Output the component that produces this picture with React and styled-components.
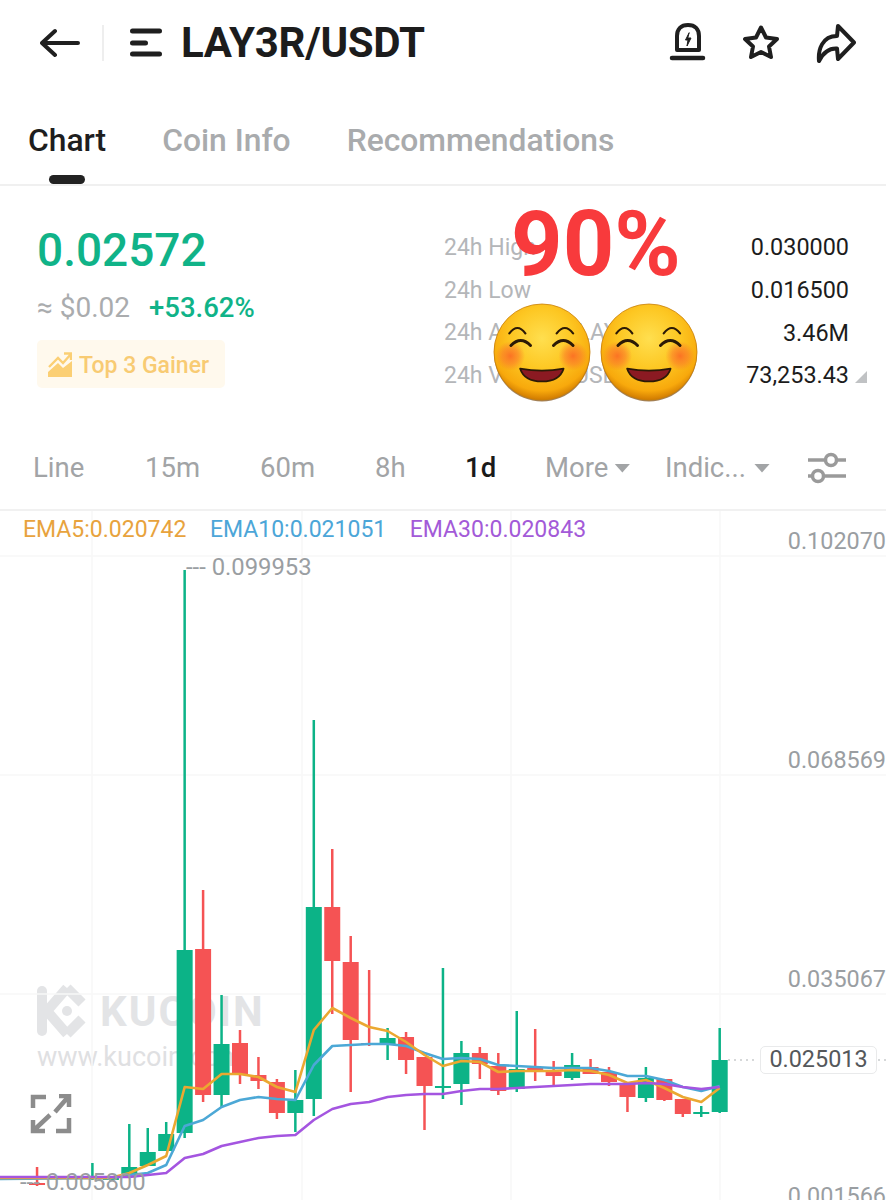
import React from "react";
import styled, { createGlobalStyle } from "styled-components";

const Global = createGlobalStyle`
  html, body { margin: 0; padding: 0; background: #fff; }
  body { font-family: Roboto, "Liberation Sans", sans-serif; }
  * { box-sizing: border-box; }
`;

const Page = styled.div`
  width: 886px;
  height: 1200px;
  overflow: hidden;
  background: #fff;
`;

const Header = styled.header`
  display: flex;
  align-items: center;
  height: 86px;
  padding: 0 30px 0 40px;
`;
const HeaderIcon = styled.svg`
  display: block;
  flex: none;
  fill: none;
  stroke: #1f1f1f;
  stroke-width: ${(p) => p.$stroke || 4};
  stroke-linecap: round;
  stroke-linejoin: round;
`;
const Divider = styled.div`
  width: 2px;
  height: 36px;
  margin: 0 26px 0 22px;
  background: #eeeeee;
`;
const Title = styled.h1`
  margin: 0 0 0 15px;
  font-size: 42px;
  line-height: 48px;
  font-weight: 700;
  letter-spacing: -0.3px;
  color: #1c1c1c;
`;
const HeaderActions = styled.div`
  display: flex;
  align-items: center;
  gap: 35px;
  margin-left: auto;
`;

const Tabs = styled.nav`
  display: flex;
  gap: 56px;
  height: 100px;
  padding: 32px 0 0 28px;
  border-bottom: 2px solid #f0f0f0;
`;
const Tab = styled.div`
  position: relative;
  height: 66px;
  font-size: 31.8px;
  line-height: 44px;
  font-weight: 500;
  color: ${(p) => (p.$active ? "#1e1e1e" : "#a9abad")};
  &::after {
    content: "";
    display: ${(p) => (p.$active ? "block" : "none")};
    position: absolute;
    left: 21px;
    bottom: 0;
    width: 36px;
    height: 9px;
    border-radius: 5px;
    background: #222;
  }
`;

const Summary = styled.section`
  position: relative;
  display: flex;
  justify-content: space-between;
  height: 254px;
  padding: 36px 37px 0 37px;
`;
const PriceColumn = styled.div`
  display: flex;
  flex-direction: column;
  align-items: flex-start;
`;
const Price = styled.div`
  font-size: 46px;
  line-height: 56px;
  font-weight: 500;
  color: #10b388;
`;
const SubRow = styled.div`
  display: flex;
  gap: 19px;
  margin-top: 8px;
  line-height: 44px;
`;
const Fiat = styled.span`
  font-size: 28px;
  color: #aaacae;
`;
const Change = styled.span`
  font-size: 27.5px;
  font-weight: 500;
  color: #10b388;
`;
const GainerTag = styled.div`
  display: flex;
  align-items: center;
  gap: 7px;
  height: 48px;
  margin-top: 10px;
  padding: 2px 16px 0 11px;
  border-radius: 5px;
  background: #fff9ed;
  font-size: 23px;
  font-weight: 500;
  color: #f8cb73;
`;
const Stats = styled.div`
  display: grid;
  grid-template-columns: 1fr auto;
  width: 405px;
  padding-top: 4px;
  grid-auto-rows: 42.7px;
  align-items: center;
  align-self: flex-start;
`;
const StatLabel = styled.div`
  font-size: 23px;
  color: #b4b6b9;
  white-space: nowrap;
`;
const StatValue = styled.div`
  position: relative;
  font-size: 23.4px;
  text-align: right;
  color: #1c1c1c;
  &::after {
    content: "";
    display: ${(p) => (p.$caret ? "block" : "none")};
    position: absolute;
    left: 100%;
    bottom: 6px;
    margin-left: 6px;
    border-style: solid;
    border-width: 0 0 12px 12px;
    border-color: transparent transparent #c0c2c4 transparent;
  }
`;
const BigPercent = styled.div`
  position: absolute;
  left: 511px;
  top: 7px;
  font-size: 90px;
  line-height: 104px;
  font-weight: 700;
  color: #f83a3c;
`;
const EmojiRow = styled.div`
  position: absolute;
  left: 493px;
  top: 117px;
  display: flex;
  gap: 9px;
`;

const Intervals = styled.div`
  display: grid;
  grid-template-columns: 112px 115px 115px 90px 80px 120px 142px auto;
  align-items: center;
  height: 71px;
  padding: 8px 0 23px 33px;
  border-bottom: 2px solid #f1f1f1;
`;
const Interval = styled.div`
  display: flex;
  align-items: center;
  font-size: 27.5px;
  line-height: 40px;
  font-weight: ${(p) => (p.$active ? 500 : 400)};
  color: ${(p) => (p.$active ? "#1a1a1a" : "#a2a4a6")};
`;
const DownCaret = styled.span`
  margin-left: ${(p) => p.$gap}px;
  width: 16px;
  height: 9px;
  background: #a2a4a6;
  clip-path: polygon(0 0, 100% 0, 50% 100%);
`;

const Chart = styled.section`
  position: relative;
  height: 689px;
`;
const ChartSvg = styled.svg`
  position: relative;
  z-index: 1;
  display: block;
`;
const Legend = styled.div`
  position: absolute;
  z-index: 2;
  left: 23px;
  top: 3px;
  display: flex;
  gap: 23.5px;
  font-size: 23px;
  line-height: 32px;
`;
const LegendItem = styled.span`
  color: ${(p) => p.$color};
`;
const AxisLabel = styled.div`
  position: absolute;
  z-index: 2;
  right: 0;
  top: ${(p) => p.$top}px;
  font-size: 23.4px;
  line-height: 30px;
  color: #9a9ea2;
`;
const ExtremeLabel = styled.div`
  position: absolute;
  z-index: 2;
  left: ${(p) => p.$left}px;
  top: ${(p) => p.$top}px;
  font-size: 23.8px;
  line-height: 30px;
  white-space: nowrap;
  color: #9a9ea2;
`;
const PriceTag = styled.div`
  position: absolute;
  z-index: 2;
  left: 760px;
  top: 535px;
  width: 117px;
  height: 28px;
  border: 1.5px solid #e9eaeb;
  border-radius: 5px;
  background: #fff;
  font-size: 23.4px;
  line-height: 25px;
  text-align: center;
  color: #55585b;
`;
const WatermarkLogo = styled.svg`
  position: absolute;
  left: 34px;
  top: 472px;
  fill: none;
  stroke: #e3e4e6;
  stroke-width: 10;
`;
const WatermarkName = styled.div`
  position: absolute;
  left: 100px;
  top: 477px;
  font-size: 42px;
  line-height: 48px;
  font-weight: 700;
  letter-spacing: 2px;
  color: #e3e4e6;
`;
const WatermarkUrl = styled.div`
  position: absolute;
  left: 37px;
  top: 530px;
  font-size: 27px;
  line-height: 32px;
  color: #dfe0e2;
`;
const FullscreenIcon = styled.svg`
  position: absolute;
  z-index: 2;
  left: 30px;
  top: 583px;
  fill: none;
  stroke: #8c8c8c;
  stroke-width: 4.5;
`;

const GREEN = "#0cb387";
const RED = "#f55354";
// [index, colour, wick top, body top, body bottom, wick bottom]
const candles = [
  [-5, "r", 1167, 1183, 1185, 1186],
  [-2, "g", 1163, 1176, 1179, 1180],
  [-1, "g", 1176, 1177, 1180, 1181],
  [0, "g", 1124, 1167, 1175, 1176],
  [1, "g", 1128, 1152, 1166, 1166],
  [2, "g", 1122, 1134, 1151, 1151],
  [3, "g", 570, 950, 1133, 1138],
  [4, "r", 890, 949, 1095, 1102],
  [5, "g", 995, 1044, 1095, 1107],
  [6, "r", 1030, 1043, 1074, 1084],
  [7, "r", 1057, 1075, 1081, 1089],
  [8, "r", 1079, 1082, 1113, 1119],
  [9, "g", 1070, 1100, 1113, 1132],
  [10, "g", 720, 907, 1099, 1116],
  [11, "r", 849, 907, 961, 1014],
  [12, "r", 936, 962, 1040, 1092],
  [13, "r", 970, 1043, 1045, 1046],
  [14, "g", 1028, 1038, 1044, 1060],
  [15, "r", 1032, 1037, 1060, 1074],
  [16, "r", 1057, 1057, 1086, 1130],
  [17, "g", 968, 1086, 1088, 1099],
  [18, "g", 1041, 1053, 1084, 1105],
  [19, "r", 1047, 1053, 1064, 1079],
  [20, "r", 1053, 1066, 1091, 1095],
  [21, "g", 1011, 1069, 1089, 1092],
  [22, "r", 1029, 1068, 1071, 1081],
  [23, "r", 1061, 1072, 1076, 1085],
  [24, "g", 1053, 1065, 1078, 1080],
  [25, "r", 1059, 1067, 1074, 1074],
  [26, "r", 1067, 1072, 1082, 1086],
  [27, "r", 1083, 1083, 1097, 1112],
  [28, "g", 1067, 1078, 1098, 1102],
  [29, "r", 1079, 1079, 1100, 1101],
  [30, "r", 1099, 1099, 1114, 1117],
  [31, "g", 1106, 1112, 1114, 1117],
  [32, "g", 1028, 1060, 1112, 1113],
];
const cx = (i) => 129.3 + 18.45 * i;

const ema5 = [1173,1165,1156,1087,1089,1074,1074,1077,1087,1092,1030,1008,1018,1027,1031,1042,1055,1066,1061,1062,1072,1071,1071,1071,1070,1071,1075,1083,1080,1088,1097,1102,1088];
const ema10 = [1175,1173,1165,1126,1120,1107,1100,1097,1099,1100,1065,1046,1045,1044,1044,1046,1053,1059,1058,1059,1065,1066,1067,1068,1068,1068,1071,1076,1076,1080,1087,1091,1086];
const ema30 = [1177,1175,1173,1158,1154,1146,1142,1138,1136,1135,1120,1109,1104,1102,1097,1095,1094,1094,1091,1089,1089,1088,1087,1086,1085,1084,1084,1084,1083,1084,1087,1089,1087];
const toPoints = (ys, start) =>
  `${start} ` + ys.map((y, i) => `${cx(i).toFixed(1)},${y}`).join(" ");

const Emoji = ({ id }) => (
  <svg width="98" height="100" viewBox="0 0 100 102">
    <defs>
      <radialGradient id={`${id}-face`} cx="50%" cy="36%" r="64%">
        <stop offset="0%" stopColor="#ffdf4f" />
        <stop offset="50%" stopColor="#fdc722" />
        <stop offset="85%" stopColor="#f8a90c" />
        <stop offset="100%" stopColor="#d07a00" />
      </radialGradient>
      <radialGradient id={`${id}-cheek`}>
        <stop offset="0%" stopColor="#fb6f24" stopOpacity="0.95" />
        <stop offset="55%" stopColor="#fb7a2a" stopOpacity="0.6" />
        <stop offset="100%" stopColor="#fb7a2a" stopOpacity="0" />
      </radialGradient>
    </defs>
    <circle cx="50" cy="51.5" r="49" fill="#7a4a10" opacity="0.7" />
    <circle cx="50" cy="50" r="49" fill={`url(#${id}-face)`} stroke="#c77f0a" strokeWidth="0.8" />
    <circle cx="17.7" cy="54" r="15" fill={`url(#${id}-cheek)`} />
    <circle cx="81.7" cy="54" r="15" fill={`url(#${id}-cheek)`} />
    <g fill="none" stroke="#2c1a06" strokeWidth="2.2" strokeLinecap="round">
      <path d="M16.7 31Q25 20 33 31M65 31Q73.3 20 81.7 31" />
      <path strokeWidth="3" d="M18.3 43.3Q28.3 33 38.3 43.3M61.7 43.3Q71.7 33 81.7 43.3" />
    </g>
    <path d="M27.7 67Q50 71 72 67Q68 80 50 80Q32 80 27.700 67Z" fill="#8b1a22" stroke="#2c1a06" strokeWidth="1.8" strokeLinejoin="round" />
  </svg>
);

const stats = [
  ["24h High", "0.030000"],
  ["24h Low", "0.016500"],
  ["24h Amount(LAY3R)", "3.46M"],
  ["24h Volume(USDT)", "73,253.43", true],
];

export default function App() {
  return (
    <Page>
      <Global />
      <Header>
        <HeaderIcon width="40" height="36" viewBox="0 0 40 36">
          <path d="M2 18H38M15 6L2 18L15 30" />
        </HeaderIcon>
        <Divider />
        <HeaderIcon width="36" height="32" viewBox="0 0 36 32" $stroke={5}>
          <path d="M2.500 4H29.500M2.500 16H15.500M2.500 27H29.500" />
        </HeaderIcon>
        <Title>LAY3R/USDT</Title>
        <HeaderActions>
          <HeaderIcon width="40" height="40" viewBox="0 0 40 40">
            <path d="M11 27V13C11 6 15 2 22 2C29 2 33 6 33 13V27Z" />
            <path d="M6 35H37" strokeWidth="4.500" />
            <path d="M23 10L19.500 17H22L21 23L25 15H22Z" strokeWidth="1" fill="#1f1f1f" />
          </HeaderIcon>
          <HeaderIcon width="40" height="36" viewBox="0 0 40 36">
            <path d="M20 2.500L25 12.500L36 14L28 21.500L30 32L20 27L10 32L12 21.500L4 14L15 12.500Z" />
          </HeaderIcon>
          <HeaderIcon width="40" height="40" viewBox="0 0 40 40">
            <path d="M22 3L38 19.500L22 36L21 25.500C13 25 7 30 3 38C2 27 6 13 21 13Z" />
          </HeaderIcon>
        </HeaderActions>
      </Header>

      <Tabs>
        <Tab $active>Chart</Tab>
        <Tab>Coin Info</Tab>
        <Tab>Recommendations</Tab>
      </Tabs>

      <Summary>
        <PriceColumn>
          <Price>0.02572</Price>
          <SubRow>
            <Fiat>≈ $0.02</Fiat>
            <Change>+53.62%</Change>
          </SubRow>
          <GainerTag>
            <svg width="24" height="26" viewBox="0 0 24 26">
              <path d="M0 25V20L10 11L15 16L24 9V25Z" fill="#fbcf74" />
              <path d="M1 15L10 6L15 11L23 2M16 1.500H23V8" fill="none" stroke="#fbcf74" strokeWidth="2.400" />
            </svg>
            Top 3 Gainer
          </GainerTag>
        </PriceColumn>
        <Stats>
          {stats.map(([label, value, caret]) => (
            <React.Fragment key={label}>
              <StatLabel>{label}</StatLabel>
              <StatValue $caret={caret}>{value}</StatValue>
            </React.Fragment>
          ))}
        </Stats>
        <BigPercent>90%</BigPercent>
        <EmojiRow>
          <Emoji id="emoji-a" />
          <Emoji id="emoji-b" />
        </EmojiRow>
      </Summary>

      <Intervals>
        <Interval>Line</Interval>
        <Interval>15m</Interval>
        <Interval>60m</Interval>
        <Interval>8h</Interval>
        <Interval $active>1d</Interval>
        <Interval>More<DownCaret $gap={6} /></Interval>
        <Interval>Indic...<DownCaret $gap={8} /></Interval>
        <svg width="40" height="32" viewBox="0 0 40 32" fill="none" stroke="#9a9a9a" strokeWidth="3.500">
          <path d="M1 8H39M1 24H39" />
          <circle cx="24" cy="8" r="5.500" fill="#fff" />
          <circle cx="11" cy="24" r="5.500" fill="#fff" />
        </svg>
      </Intervals>

      <Chart>
        <WatermarkLogo width="54" height="56" viewBox="0 0 54 56">
          <path d="M8 8V48" strokeLinecap="round" />
          <path d="M33 5L13 28L33 51" />
          <path d="M33 5L48 20M48 36L33 51" />
          <circle cx="33" cy="28" r="5" fill="#e3e4e6" stroke="none" />
        </WatermarkLogo>
        <WatermarkName>KUCOIN</WatermarkName>
        <WatermarkUrl>www.kucoin.com</WatermarkUrl>

        <ChartSvg width="886" height="689" viewBox="0 511 886 689">
          <g stroke="#f8f8f8" strokeWidth="1.500">
            <path d="M92 511V1200M302 511V1200M511 511V1200M720 511V1200" />
            <path d="M0 556H886M0 775H886M0 994H886" />
          </g>
          <path d="M728 1060H758M878 1060H886" stroke="#c9cbcd" strokeWidth="1.500" strokeDasharray="2 4" />
          {candles.map(([i, c, wt, bt, bb, wb]) => {
            const color = c === "g" ? GREEN : RED;
            const x = cx(i);
            return (
              <g key={i}>
                <line x1={x} x2={x} y1={wt} y2={wb} stroke={color} strokeWidth="2.500" />
                <rect x={x - 8} y={bt} width="16" height={Math.max(bb - bt, 2)} fill={color} />
              </g>
            );
          })}
          <g fill="none" strokeWidth="2.600" strokeLinejoin="round">
            <polyline points={toPoints(ema10, "0,1179 110,1178")} stroke="#4ca8d6" />
            <polyline points={toPoints(ema5, "0,1178 110,1178")} stroke="#eba831" />
            <polyline points={toPoints(ema30, "0,1177 110,1177")} stroke="#a455e0" />
          </g>
        </ChartSvg>

        <Legend>
          <LegendItem $color="#e8a33d">EMA5:0.020742</LegendItem>
          <LegendItem $color="#4ca6d8">EMA10:0.021051</LegendItem>
          <LegendItem $color="#a35ad8">EMA30:0.020843</LegendItem>
        </Legend>
        <AxisLabel $top={15}>0.102070</AxisLabel>
        <AxisLabel $top={234}>0.068569</AxisLabel>
        <AxisLabel $top={453}>0.035067</AxisLabel>
        <AxisLabel $top={670}>0.001566</AxisLabel>
        <ExtremeLabel $left={186} $top={41}>--- 0.099953</ExtremeLabel>
        <ExtremeLabel $left={20} $top={656}>--- 0.005800</ExtremeLabel>
        <PriceTag>0.025013</PriceTag>
        <FullscreenIcon width="42" height="40" viewBox="0 0 42 40">
          <path d="M3 14V3H16M39 24V37H26" />
          <path d="M25 18L39 2M29 2H39V13M20 21L3 37M3 26V37H15" />
        </FullscreenIcon>
      </Chart>
    </Page>
  );
}
